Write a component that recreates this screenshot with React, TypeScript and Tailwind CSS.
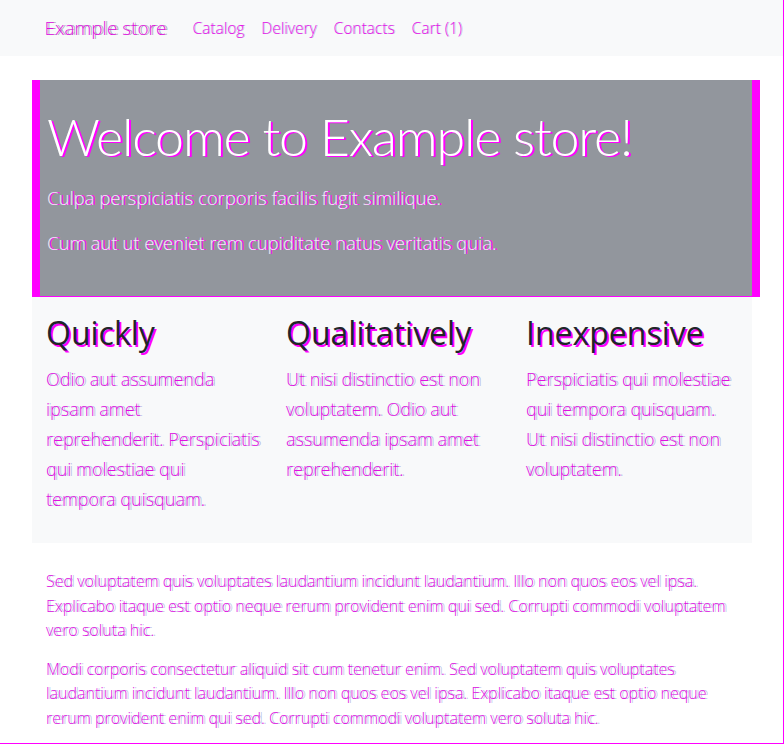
import React from 'react';

const navLinks = ['Catalog', 'Delivery', 'Contacts', 'Cart (1)'];

// lines are split the way the original page wraps them
const features = [
  {
    title: 'Quickly',
    lines: ['Odio aut assumenda', 'ipsam amet', 'reprehenderit. Perspiciatis', 'qui molestiae qui', 'tempora quisquam.'],
  },
  {
    title: 'Qualitatively',
    lines: ['Ut nisi distinctio est non', 'voluptatem. Odio aut', 'assumenda ipsam amet', 'reprehenderit.'],
  },
  {
    title: 'Inexpensive',
    lines: ['Perspiciatis qui molestiae', 'qui tempora quisquam.', 'Ut nisi distinctio est non', 'voluptatem.'],
  },
];

const paragraphs = [
  'Sed voluptatem quis voluptates laudantium incidunt laudantium. Illo non quos eos vel ipsa. Explicabo itaque est optio neque rerum provident enim qui sed. Corrupti commodi voluptatem vero soluta hic.',
  'Modi corporis consectetur aliquid sit cum tenetur enim. Sed voluptatem quis voluptates laudantium incidunt laudantium. Illo non quos eos vel ipsa. Explicabo itaque est optio neque rerum provident enim qui sed. Corrupti commodi voluptatem vero soluta hic.',
];

export default function App() {
  return (
    <div className="w-[784px] h-[744px] overflow-hidden bg-white border-r border-b border-[#ff00ff] font-['Open_Sans',sans-serif]">
      {/* Navbar */}
      <nav className="h-14 bg-[#f8f9fa]">
        <div className="w-[720px] mx-auto pl-[13px] h-full flex items-center">
          <span className="text-[19px] font-light text-[#e010e0] [text-shadow:2px_0_0_rgba(80,60,120,0.45)] mr-[26px]">
            Example store
          </span>
          <ul className="flex gap-[17px] pt-[2px]">
            {navLinks.map((l) => (
              <li key={l} className="text-[15.5px] font-light text-[#e814e8] [text-shadow:1px_0_0_rgba(90,110,200,0.4)]">
                {l}
              </li>
            ))}
          </ul>
        </div>
      </nav>

      <main className="w-[720px] ml-8 mt-6">
        {/* Hero */}
        <section className="w-[728px] h-[217px] bg-[#92969d] border-x-8 border-b border-[#ff00ff] px-[7px] pt-[25px]">
          <h1 className="font-['Lato',sans-serif] text-[52px] leading-[1.2] font-light tracking-[-1.2px] text-white [text-shadow:2px_1px_0_#ff00ff]">
            Welcome to Example store!
          </h1>
          <p className="mt-[17px] text-[18.5px] font-light text-[#f6e8f6] [text-shadow:2px_0_0_#ff00ff]">
            Culpa perspiciatis corporis facilis fugit similique.
          </p>
          <p className="mt-[17px] text-[18.5px] font-light text-[#f6e8f6] [text-shadow:2px_0_0_#ff00ff]">
            Cum aut ut eveniet rem cupiditate natus veritatis quia.
          </p>
        </section>

        {/* Features */}
        <section className="bg-[#f8f9fa] h-[246px] grid grid-cols-3 pt-[17px]">
          {features.map((f) => (
            <div key={f.title} className="pl-[14px]">
              <h2 className="text-[32px] leading-[1.2] text-[#212529] [text-shadow:2px_2px_0_#ff00ff]">{f.title}</h2>
              <p className="mt-[12px] text-[18px] leading-[30px] font-light text-[#e010e0] [text-shadow:2px_0_0_rgba(90,110,200,0.4)]">
                {f.lines.map((line) => (
                  <span key={line} className="block whitespace-nowrap">
                    {line}
                  </span>
                ))}
              </p>
            </div>
          ))}
        </section>

        {/* Text */}
        <section className="px-[14px] pt-[26px]">
          {paragraphs.map((p, i) => (
            <p key={i} className="mb-[14px] text-[16px] leading-[24.5px] font-light text-[#e010e0] [text-shadow:2px_0_0_rgba(90,110,200,0.4)]">
              {p}
            </p>
          ))}
        </section>
      </main>
    </div>
  );
}
